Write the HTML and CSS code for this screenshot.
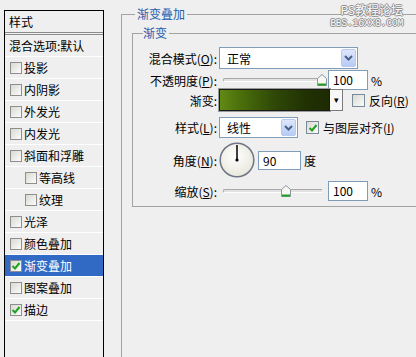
FILE: index.html
```html
<!DOCTYPE html>
<html lang="zh-CN">
<head>
    <meta charset="UTF-8">
    <meta name="viewport" content="width=device-width, initial-scale=1.0">
    <title>图层样式 - 渐变叠加</title>
    <link rel="stylesheet" href="styles.css">
</head>
<body>
    <!-- 水印 -->
    <div class="watermark">
        <div class="wm-top">PS教程论坛</div>
        <div class="wm-bottom">BBS.16XX8.COM</div>
    </div>

    <div class="dialog">
        <!-- 样式列表 -->
        <div class="style-list">
            <div class="list-head">样式</div>
            <div class="list-item blend">混合选项:默认</div>
            <div class="list-item"><span class="check"></span>投影</div>
            <div class="list-item"><span class="check"></span>内阴影</div>
            <div class="list-item"><span class="check"></span>外发光</div>
            <div class="list-item"><span class="check"></span>内发光</div>
            <div class="list-item"><span class="check"></span>斜面和浮雕</div>
            <div class="list-item sub"><span class="check"></span>等高线</div>
            <div class="list-item sub"><span class="check"></span>纹理</div>
            <div class="list-item"><span class="check"></span>光泽</div>
            <div class="list-item"><span class="check"></span>颜色叠加</div>
            <div class="list-item selected"><span class="check"><svg width="10" height="10" viewBox="0 0 10 10"><path d="M1.5 5 L4 7.5 L8.5 2" fill="none" stroke="#21a121" stroke-width="2"/></svg></span>渐变叠加</div>
            <div class="list-item"><span class="check"></span>图案叠加</div>
            <div class="list-item"><span class="check"><svg width="10" height="10" viewBox="0 0 10 10"><path d="M1.5 5 L4 7.5 L8.5 2" fill="none" stroke="#21a121" stroke-width="2"/></svg></span>描边</div>
        </div>

        <!-- 渐变叠加 -->
        <fieldset class="group outer">
            <legend>渐变叠加</legend>
            <fieldset class="group inner">
                <legend>渐变</legend>

                <div class="row r-mode">
                    <span class="lbl">混合模式(<u>O</u>):</span>
                    <div class="select mode"><span>正常</span><span class="drop"><svg width="9" height="6" viewBox="0 0 9 6"><path d="M1 1 L4.5 4.5 L8 1" fill="none" stroke="#4d6185" stroke-width="2"/></svg></span></div>
                </div>

                <div class="row r-opacity">
                    <span class="lbl">不透明度(<u>P</u>):</span>
                    <div class="slider"><span class="track"></span><span class="thumb" style="left: 94px"><svg width="10" height="12" viewBox="0 0 10 12"><path d="M0.5 4.5 L5 0.5 L9.5 4.5 L9.5 11.5 L0.5 11.5 Z" fill="#f7f7f3" stroke="#8a96a2"/><path d="M1 10.5 H9" stroke="#21a121" stroke-width="2"/></svg></span></div>
                    <div class="field num">100</div>
                    <span class="unit">%</span>
                </div>

                <div class="row r-gradient">
                    <span class="lbl">渐变:</span>
                    <div class="gradient"></div>
                    <div class="grad-drop">&#9662;</div>
                    <span class="check big"></span>
                    <span class="opt">反向(<u>R</u>)</span>
                </div>

                <div class="row r-style">
                    <span class="lbl">样式(<u>L</u>):</span>
                    <div class="select kind"><span>线性</span><span class="drop"><svg width="9" height="6" viewBox="0 0 9 6"><path d="M1 1 L4.5 4.5 L8 1" fill="none" stroke="#4d6185" stroke-width="2"/></svg></span></div>
                    <span class="check big"><svg width="10" height="10" viewBox="0 0 10 10"><path d="M1.5 5 L4 7.5 L8.5 2" fill="none" stroke="#21a121" stroke-width="2"/></svg></span>
                    <span class="opt">与图层对齐(<u>I</u>)</span>
                </div>

                <div class="row r-angle">
                    <span class="lbl">角度(<u>N</u>):</span>
                    <svg class="dial" width="36" height="36" viewBox="0 0 36 36">
                        <defs>
                            <radialGradient id="dialFill" cx="0.45" cy="0.4" r="0.6">
                                <stop offset="0" stop-color="#ffffff"/>
                                <stop offset="1" stop-color="#e9e8dc"/>
                            </radialGradient>
                        </defs>
                        <circle cx="18" cy="18" r="16.8" fill="url(#dialFill)" stroke="#6f7787" stroke-width="1.5"/>
                        <line x1="18" y1="18" x2="18" y2="3" stroke="#000" stroke-width="1.5"/>
                        <circle cx="18" cy="18" r="1.6" fill="#000"/>
                    </svg>
                    <div class="field ang">90</div>
                    <span class="unit deg">度</span>
                </div>

                <div class="row r-scale">
                    <span class="lbl">缩放(<u>S</u>):</span>
                    <div class="slider"><span class="track"></span><span class="thumb" style="left: 58px"><svg width="10" height="12" viewBox="0 0 10 12"><path d="M0.5 4.5 L5 0.5 L9.5 4.5 L9.5 11.5 L0.5 11.5 Z" fill="#f7f7f3" stroke="#8a96a2"/><path d="M1 10.5 H9" stroke="#21a121" stroke-width="2"/></svg></span></div>
                    <div class="field num">100</div>
                    <span class="unit">%</span>
                </div>
            </fieldset>
        </fieldset>
    </div>
</body>
</html>
```

FILE: styles.css
```css
body {
    margin: 0;
    height: 357px;
    overflow: hidden;
    position: relative;
    background: #efefef;
    font-family: "Noto Sans CJK SC", sans-serif;
    font-size: 12px;
    color: #000;
}
u {
    text-decoration: underline;
    text-underline-offset: 1px;
}
.dialog {
    display: flex;
    align-items: flex-start;
}

/* 左侧样式列表 */
.style-list {
    margin: 10px 0 0 4px;
    width: 98px;
    height: 346px;
    border: 1px solid #000;
    border-bottom: none;
}
.list-head {
    height: 21px;
    line-height: 21px;
    padding-left: 4px;
    border-bottom: 3px double #8c8c8c;
}
.list-item {
    display: flex;
    align-items: center;
    height: 21px;
    padding-left: 5px;
    border-bottom: 1px solid #fff;
    white-space: nowrap;
}
.list-item.blend {
    padding-left: 4px;
}
.list-item.sub {
    padding-left: 20px;
}
.list-item.selected {
    background: #316ac5;
    color: #fff;
}
.check {
    display: flex;
    align-items: center;
    justify-content: center;
    box-sizing: border-box;
    width: 12px;
    height: 12px;
    margin-right: 2px;
    border: 1px solid #8e8e8e;
    background: linear-gradient(135deg, #dadad2, #fbfbfb);
}
.check.big {
    width: 13px;
    height: 13px;
    border-color: #7b8a99;
}

/* 分组框 */
.group {
    border: 1px solid #a3a3a3;
    border-right: none;
    margin: 0;
}
.group legend {
    line-height: 16px;
    color: #2c5cac;
}
.outer {
    flex: 1;
    min-width: 0;
    height: 351px;
    box-sizing: border-box;
    margin: 6px 0 0 17px;
    padding: 3px 0 0 10px;
    border-bottom: none;
}
.outer > legend {
    margin-left: 3px;
    padding: 0 2px;
}
.inner {
    padding: 6px 0 5px 10px;
}
.inner > legend {
    padding: 0 2px 0 0;
}

/* 表单行 */
.row {
    display: flex;
    align-items: center;
    white-space: nowrap;
}
.lbl {
    width: 74px;
    margin-right: 2px;
    text-align: right;
}
.r-mode { height: 22px; }
.r-opacity { height: 20px; margin-top: 1px; }
.r-gradient { height: 22px; margin-top: -1px; }
.r-style { height: 21px; margin-top: 6px; }
.r-angle { height: 36px; margin-top: 4px; }
.r-scale { height: 20px; margin-top: 3px; }

.select {
    display: flex;
    align-items: center;
    justify-content: space-between;
    box-sizing: border-box;
    height: 100%;
    padding: 1px 1px 1px 7px;
    border: 1px solid #7f9db9;
    background: #fff;
}
.select.mode { width: 139px; }
.select.kind { width: 79px; }
.drop {
    display: flex;
    align-items: center;
    justify-content: center;
    box-sizing: border-box;
    width: 15px;
    height: 100%;
    border: 1px solid #b8caf2;
    border-radius: 2px;
    background: linear-gradient(#dde7fd, #b7cbf5);
}

.slider {
    position: relative;
    display: flex;
    align-items: center;
    width: 99px;
    height: 100%;
    margin-left: 4px;
}
.track {
    flex: 1;
    height: 2px;
    border-top: 1px solid #a8a8a8;
    border-bottom: 1px solid #fff;
    border-left: 1px solid #a8a8a8;
    border-radius: 2px 0 0 2px;
    background: #e2e2e2;
}
.thumb {
    position: absolute;
    top: 4px;
    width: 10px;
    height: 12px;
    display: flex;
}

.field {
    box-sizing: border-box;
    height: 20px;
    line-height: 18px;
    padding-left: 4px;
    border: 1px solid #7f9db9;
    background: #fff;
}
.field.num {
    width: 40px;
    margin-left: 6px;
}
.field.ang {
    width: 43px;
    height: 19px;
    line-height: 17px;
    margin-left: 3px;
}
.unit {
    margin-left: 3px;
}

.gradient {
    box-sizing: border-box;
    width: 111px;
    height: 22px;
    border: 1px solid #1a1a1a;
    box-shadow: 0 0 0 1px #9a9a9a;
    background: linear-gradient(to right, #628a16 0%, #4c700c 18%, #2f4806 50%, #203103 80%, #1d2b03 100%);
}
.grad-drop {
    box-sizing: border-box;
    width: 13px;
    height: 22px;
    line-height: 20px;
    text-align: center;
    font-size: 9px;
    border: 1px solid #7a7a7a;
    border-left: none;
    background: #f7f7f7;
}
.r-gradient .check.big {
    margin-left: 9px;
}
.r-style .check.big {
    margin-left: 8px;
}
.opt {
    margin-left: 2px;
}

.dial {
    display: block;
}

/* 水印 */
.watermark {
    position: absolute;
    top: 3px;
    right: 13px;
    text-align: right;
    color: #fbfbfb;
    text-shadow: 1px 0 #8d8d8d, -1px 0 #8d8d8d, 0 1px #8d8d8d, 0 -1px #8d8d8d;
    z-index: 2;
}
.wm-top {
    font-size: 12px;
    line-height: 14px;
    margin-bottom: 2px;
}
.wm-bottom {
    font-family: "Liberation Mono", monospace;
    font-size: 10px;
    line-height: 10px;
    letter-spacing: -0.4px;
}
```
